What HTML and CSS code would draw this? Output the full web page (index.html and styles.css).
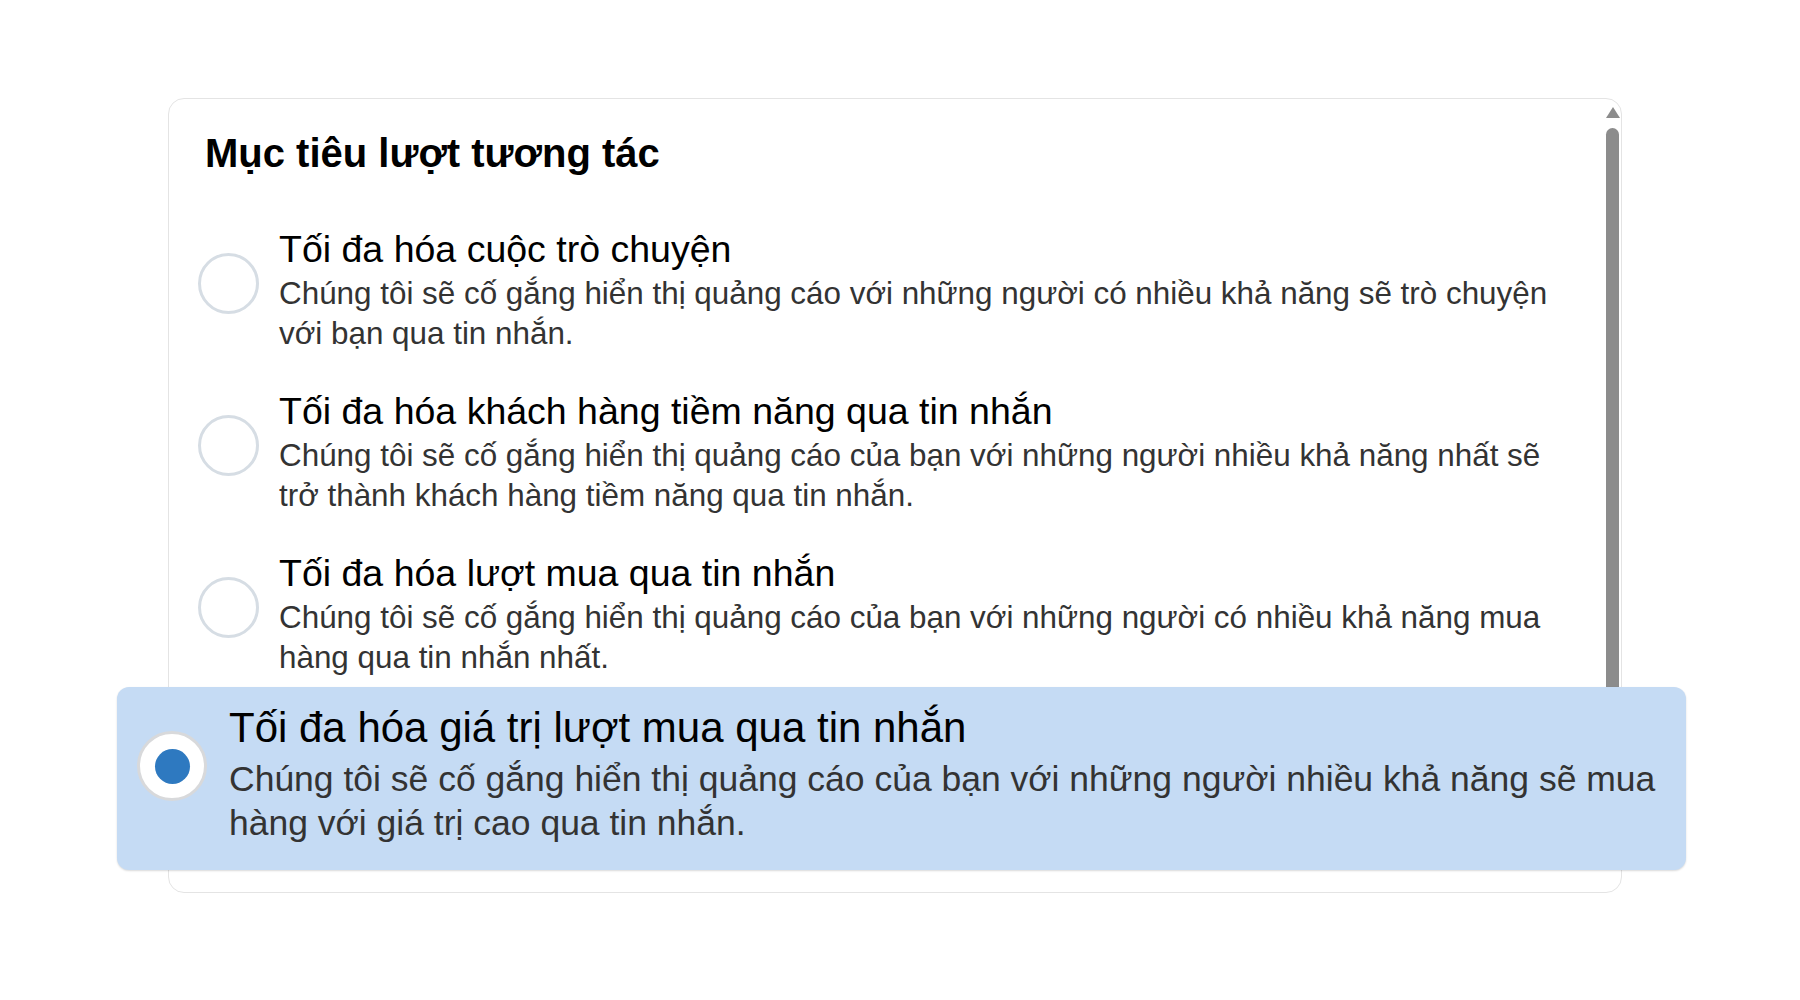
FILE: index.html
```html
<!DOCTYPE html>
<html lang="vi">
<head>
    <meta charset="UTF-8">
    <meta name="viewport" content="width=device-width, initial-scale=1.0">
    <title>Mục tiêu lượt tương tác</title>
    <link rel="stylesheet" href="styles.css">
</head>
<body>
    <div class="muc-tieu-panel">
        <h2 class="muc-tieu-title">Mục tiêu lượt tương tác</h2>

        <div class="option-list">
            <label class="option-row">
                <span class="radio"></span>
                <span class="option-text">
                    <span class="option-name">Tối đa hóa cuộc trò chuyện</span>
                    <span class="option-desc">Chúng tôi sẽ cố gắng hiển thị quảng cáo với những người có nhiều khả năng sẽ trò chuyện với bạn qua tin nhắn.</span>
                </span>
            </label>
            <label class="option-row">
                <span class="radio"></span>
                <span class="option-text">
                    <span class="option-name">Tối đa hóa khách hàng tiềm năng qua tin nhắn</span>
                    <span class="option-desc">Chúng tôi sẽ cố gắng hiển thị quảng cáo của bạn với những người nhiều khả năng nhất sẽ trở thành khách hàng tiềm năng qua tin nhắn.</span>
                </span>
            </label>
            <label class="option-row">
                <span class="radio"></span>
                <span class="option-text">
                    <span class="option-name">Tối đa hóa lượt mua qua tin nhắn</span>
                    <span class="option-desc">Chúng tôi sẽ cố gắng hiển thị quảng cáo của bạn với những người có nhiều khả năng mua hàng qua tin nhắn nhất.</span>
                </span>
            </label>
        </div>

        <label class="option-row option-selected">
            <span class="radio radio-checked"><span class="radio-dot"></span></span>
            <span class="option-text">
                <span class="option-name">Tối đa hóa giá trị lượt mua qua tin nhắn</span>
                <span class="option-desc">Chúng tôi sẽ cố gắng hiển thị quảng cáo của bạn với những người nhiều khả năng sẽ mua hàng với giá trị cao qua tin nhắn.</span>
            </span>
        </label>

        <div class="scrollbar">
            <span class="scroll-arrow"></span>
            <span class="scroll-thumb"></span>
        </div>
    </div>
</body>
</html>
```

FILE: styles.css
```css
body {
    margin: 0;
    font-family: "Liberation Sans", Arial, sans-serif;
    background-color: #fff;
}
.muc-tieu-panel {
    position: relative;
    box-sizing: border-box;
    width: 1454px;
    margin: 98px 0 0 168px;
    padding: 32px 0 22px 0;
    border: 1px solid #e4e4e4;
    border-radius: 16px;
    background-color: #fff;
}
.muc-tieu-title {
    margin: 0;
    padding-left: 36px;
    font-size: 40px;
    line-height: 44px;
    font-weight: bold;
    color: #000;
}
.option-list {
    display: flex;
    flex-direction: column;
    gap: 35px;
    margin-top: 52px;
    padding: 0 41px 0 29px;
}
.option-row {
    display: flex;
    align-items: flex-start;
    gap: 20px;
}
.radio {
    flex: none;
    box-sizing: border-box;
    width: 61px;
    height: 61px;
    margin-top: 26px;
    border: 3px solid #d6dde4;
    border-radius: 50%;
    background-color: #fff;
}
.option-text {
    display: flex;
    flex-direction: column;
}
.option-name {
    font-size: 37.5px;
    line-height: 44px;
    color: #000;
}
.option-desc {
    margin-top: 3px;
    font-size: 31.4px;
    line-height: 40px;
    color: #333;
}

/* muc dang chon, noi len tren khung */
.option-selected {
    position: relative;
    z-index: 1;
    margin: 9px -65px 0 -52px;
    padding: 17px 20px 25px 20px;
    gap: 22px;
    border-radius: 12px;
    background-color: #c5dbf4;
    box-shadow: 0 1px 2px rgba(0, 0, 0, 0.15);
}
.option-selected .radio {
    width: 70px;
    height: 70px;
    margin-top: 27px;
    border-color: #d8d9db;
    display: flex;
    justify-content: center;
    align-items: center;
}
.radio-dot {
    width: 35px;
    height: 35px;
    border-radius: 50%;
    background-color: #2e79c0;
}
.option-selected .option-name {
    font-size: 42px;
    line-height: 48px;
}
.option-selected .option-desc {
    margin-top: 5px;
    font-size: 35.5px;
    line-height: 44px;
}

.scrollbar {
    position: absolute;
    top: 8px;
    right: 1px;
    width: 15px;
    display: flex;
    flex-direction: column;
    align-items: center;
}
.scroll-arrow {
    width: 0;
    height: 0;
    border-left: 7px solid transparent;
    border-right: 7px solid transparent;
    border-bottom: 11px solid #8c8c8c;
}
.scroll-thumb {
    width: 13px;
    height: 620px;
    margin-top: 10px;
    border-radius: 7px 7px 0 0;
    background-color: #8c8c8c;
}
```
